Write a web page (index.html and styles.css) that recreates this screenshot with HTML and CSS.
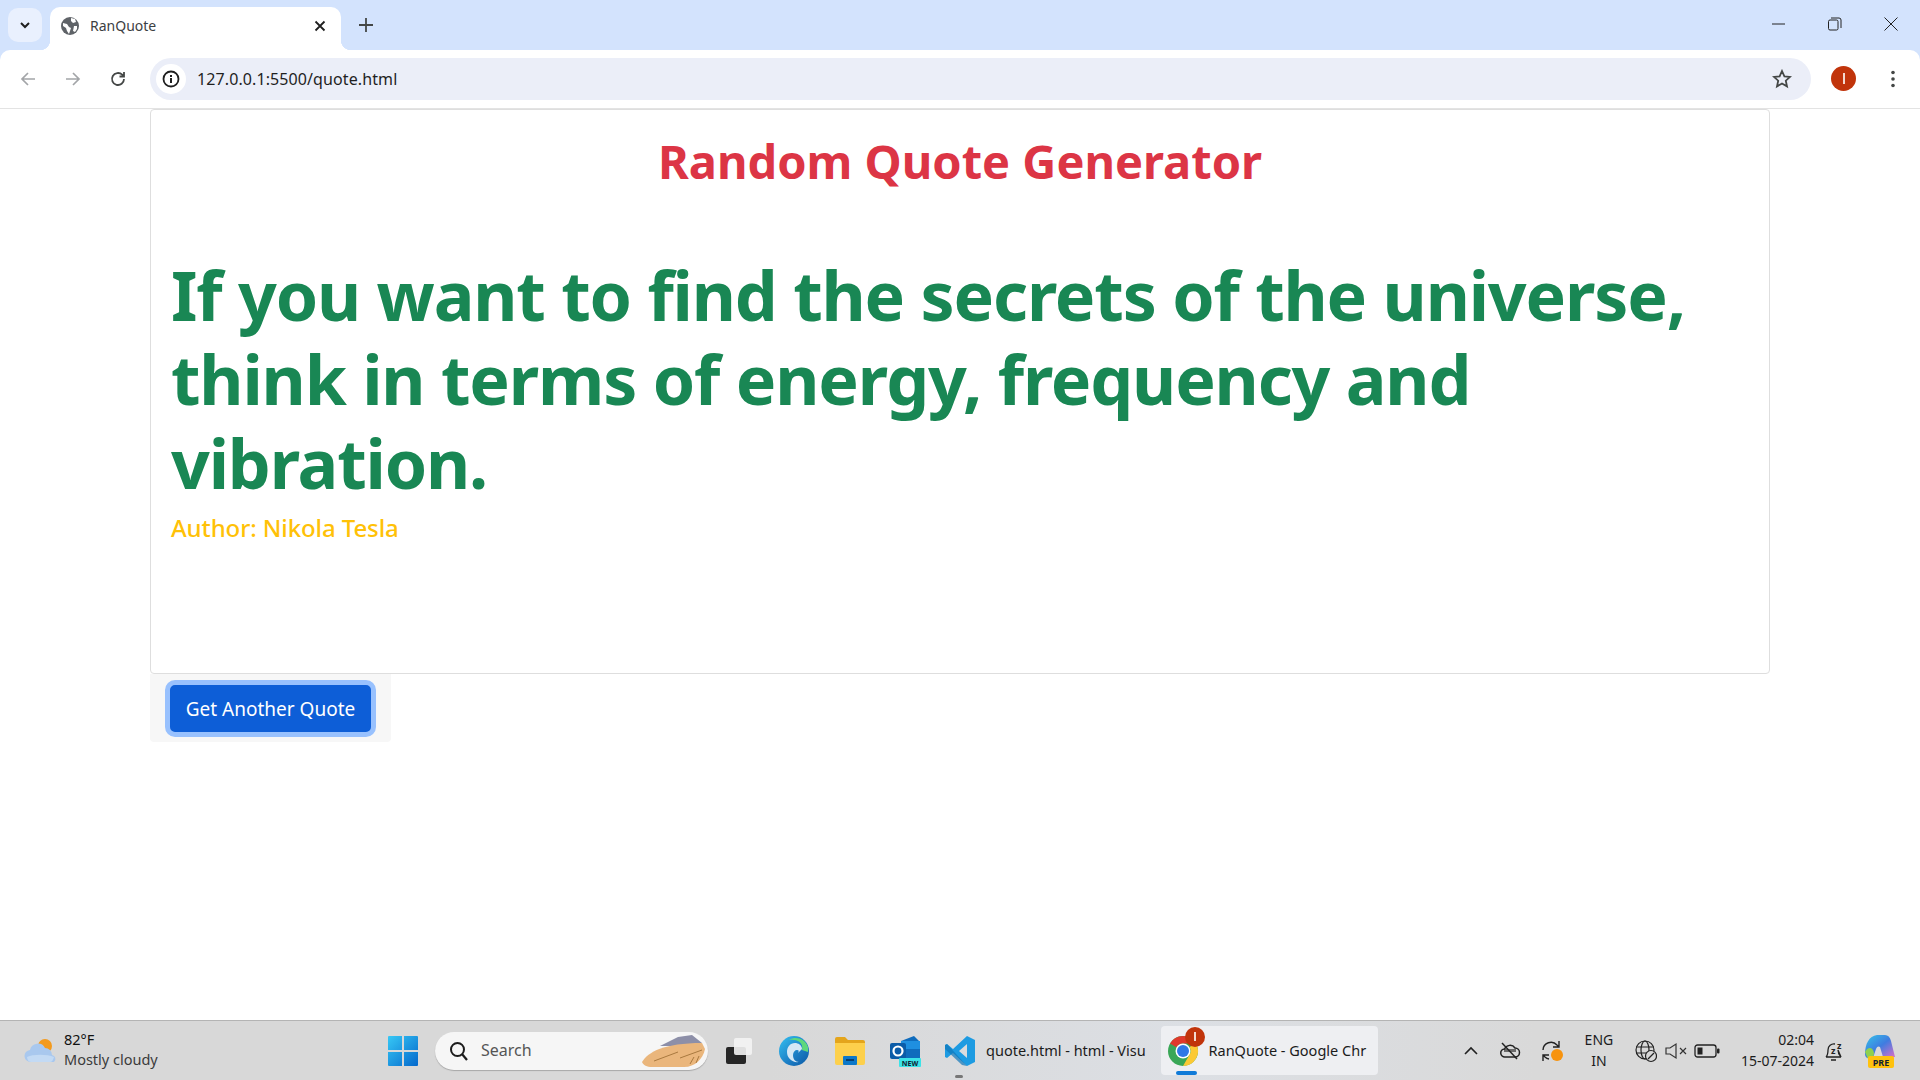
FILE: index.html
```html
<!DOCTYPE html>
<html lang="en">
<head>
    <meta charset="UTF-8">
    <title>RanQuote</title>
    <link rel="stylesheet" href="styles.css">
</head>
<body>
    <div class="browser">
        <div class="chrome-top">
            <!-- tab strip -->
            <div class="tabstrip">
                <div class="tab-search">
                    <svg width="14" height="14" viewBox="0 0 14 14"><path d="M3 5l4 4 4-4" fill="none" stroke="#1f1f1f" stroke-width="2"/></svg>
                </div>
                <div class="tab">
                    <svg class="favicon" width="18" height="18" viewBox="0 0 18 18"><circle cx="9" cy="9" r="9" fill="#5f6368"/><path d="M2 6l4 1 2 3 2 1-1 3-1 3-2-3-1-3-3-2zM10 1l4 1 1 3-3 1-2-2zM13 9l3 0 0 3-2 3-2-1z" fill="#fff"/></svg>
                    <span class="tab-title">RanQuote</span>
                    <svg class="tab-close" width="12" height="12" viewBox="0 0 12 12"><path d="M1.500 1.500l9 9M10.500 1.500l-9 9" stroke="#1f1f1f" stroke-width="1.800"/></svg>
                </div>
                <svg class="new-tab" width="14" height="14" viewBox="0 0 14 14"><path d="M7 0v14M0 7h14" stroke="#444746" stroke-width="1.800"/></svg>
                <div class="win-controls">
                    <svg width="14" height="14" viewBox="0 0 14 14"><path d="M0 7h13" stroke="#222" stroke-width="1"/></svg>
                    <svg width="14" height="14" viewBox="0 0 14 14"><rect x="0.500" y="3" width="9.500" height="10" rx="1.500" fill="none" stroke="#222"/><path d="M3 1h8a2 2 0 0 1 2 2v8" fill="none" stroke="#222"/></svg>
                    <svg width="14" height="14" viewBox="0 0 14 14"><path d="M0.500 0.500l13 13M13.500 0.500l-13 13" stroke="#222"/></svg>
                </div>
            </div>

            <!-- address bar -->
            <div class="toolbar">
                <div class="nav-icons">
                    <svg width="18" height="18" viewBox="0 0 18 18"><path d="M16 9H3M9 3L3 9l6 6" fill="none" stroke="#a3a5a8" stroke-width="1.700"/></svg>
                    <svg width="18" height="18" viewBox="0 0 18 18"><path d="M2 9h13M9 3l6 6-6 6" fill="none" stroke="#a3a5a8" stroke-width="1.700"/></svg>
                    <svg width="18" height="18" viewBox="0 0 18 18"><path d="M15 9a6 6 0 1 1-1.800-4.300L15 6.500M15 2v4.500h-4.500" fill="none" stroke="#444746" stroke-width="1.800"/></svg>
                </div>
                <div class="omnibox">
                    <div class="site-info">
                        <svg width="18" height="18" viewBox="0 0 18 18"><circle cx="9" cy="9" r="7.500" fill="none" stroke="#1f1f1f" stroke-width="1.800"/><path d="M9 8v5M9 5v2" stroke="#1f1f1f" stroke-width="2"/></svg>
                    </div>
                    <span class="url">127.0.0.1:5500/quote.html</span>
                    <svg class="star" width="20" height="20" viewBox="0 0 20 20"><path d="M10 2l2.400 5.300 5.600.6-4.200 3.800 1.200 5.700-5-2.900-5 2.900 1.200-5.700L2 7.900l5.600-.6z" fill="none" stroke="#444746" stroke-width="1.800"/></svg>
                </div>
                <div class="avatar"><span class="avatar-bar"></span></div>
                <svg class="kebab" width="4" height="18" viewBox="0 0 4 18"><circle cx="2" cy="2.500" r="1.800" fill="#444746"/><circle cx="2" cy="9" r="1.800" fill="#444746"/><circle cx="2" cy="15.500" r="1.800" fill="#444746"/></svg>
            </div>
        </div>

        <!-- page -->
        <main class="page">
            <div class="container">
                <section class="card">
                    <h1 class="heading">Random Quote Generator</h1>
                    <h2 class="quote">If you want to find the secrets of the universe, think in terms of energy, frequency and vibration.</h2>
                    <p class="author">Author: Nikola Tesla</p>
                </section>
                <div class="card-footer">
                    <button class="quote-btn" type="button">Get Another Quote</button>
                </div>
            </div>
        </main>

        <!-- windows taskbar -->
        <footer class="taskbar">
            <div class="weather">
                <svg width="34" height="28" viewBox="0 0 34 28"><circle cx="21" cy="9" r="7" fill="#f39a1d"/><path d="M7 25a6 6 0 0 1-1-12 8 8 0 0 1 15-2 7 7 0 0 1 7 7 4 4 0 0 1 2 7z" fill="#a9c8ee"/><path d="M3 20c6-3 20-3 27 0-1 3-2 5-4 5H7c-2 0-4-2-4-5z" fill="#c3daf4"/></svg>
                <div class="weather-text">
                    <span class="temp">82°F</span>
                    <span class="cond">Mostly cloudy</span>
                </div>
            </div>

            <svg class="start" width="30" height="30" viewBox="0 0 30 30">
                <defs><linearGradient id="winblue" x1="0" y1="0" x2="1" y2="1"><stop offset="0" stop-color="#37c8f5"/><stop offset="1" stop-color="#0468cc"/></linearGradient></defs>
                <path d="M0 1a1 1 0 0 1 1-1h13v14H0zM16 0h13a1 1 0 0 1 1 1v13H16zM0 16h14v14H1a1 1 0 0 1-1-1zM16 16h14v13a1 1 0 0 1-1 1H16z" fill="url(#winblue)"/>
            </svg>

            <div class="search">
                <svg width="20" height="20" viewBox="0 0 20 20"><circle cx="8.500" cy="8.500" r="6.500" fill="none" stroke="#1c1c1c" stroke-width="2"/><path d="M13 13l5 6" stroke="#1c1c1c" stroke-width="2.200"/></svg>
                <span class="search-label">Search</span>
                <svg class="search-art" width="66" height="34" viewBox="0 0 66 34"><path d="M20 12L38 3l14-2 10 8-4 3z" fill="#8d8fa8"/><path d="M2 28C8 18 24 9 62 9l3 6c-2 10-10 18-21 18H12C7 33 3 31 2 28z" fill="#eab67c"/><path d="M14 27l24-9M40 24l22-8M50 30l4-7M56 29l3-7" stroke="#a9793f" stroke-width="1" fill="none"/></svg>
            </div>

            <div class="task-icons">
                <svg width="28" height="28" viewBox="0 0 28 28"><rect x="1" y="10" width="20" height="17" rx="2" fill="#262626"/><rect x="9" y="1" width="18" height="17" rx="2" fill="#f4f4f4" fill-opacity="0.900"/></svg>
                <svg width="32" height="32" viewBox="0 0 32 32">
                    <defs><linearGradient id="edgeg" x1="0" y1="0" x2="1" y2="1"><stop offset="0" stop-color="#35c1f1"/><stop offset="0.600" stop-color="#1b7cc4"/><stop offset="1" stop-color="#0c59a4"/></linearGradient></defs>
                    <circle cx="16" cy="16" r="15" fill="url(#edgeg)"/><path d="M30 12C27 3 17 1 11 5c6-1 15 1 13 10l6 2z" fill="#5fd87c"/><path d="M24 14c0-4-4-6-7-6-5 0-8 4-8 9 0 6 5 11 12 10-4 0-6-3-6-7 0-3 2-5 4-5s2 1 1 3z" fill="#d5e7f5"/>
                </svg>
                <svg width="32" height="30" viewBox="0 0 32 30"><path d="M1 3a2 2 0 0 1 2-2h8l3 3h15a2 2 0 0 1 2 2v4H1z" fill="#e4a51c"/><path d="M1 7h30v20a2 2 0 0 1-2 2H3a2 2 0 0 1-2-2z" fill="#fdd04c"/><rect x="9" y="20" width="14" height="9" rx="1" fill="#0d78c8"/><rect x="12" y="23" width="8" height="2" fill="#063f72"/></svg>
                <svg class="outlook" width="32" height="32" viewBox="0 0 32 32"><path d="M12 6l13-5 6 6v20H12z" fill="#0f6cbd"/><path d="M12 6h19v8H12z" fill="#1f8fe0"/><rect x="1" y="8" width="16" height="16" rx="2" fill="#0b5ca8"/><circle cx="9" cy="16" r="4.500" fill="none" stroke="#fff" stroke-width="2.200"/><rect x="10" y="23" width="22" height="9" rx="1" fill="#3be3e8"/><text class="new-badge" x="21" y="30.500" text-anchor="middle">NEW</text></svg>
                <div class="vscode">
                    <svg width="32" height="32" viewBox="0 0 32 32"><path d="M23 1l8 4v22l-8 4-14-13-6 5-2-1V10l2-1 6 5zM23 9l-8 7 8 7z" fill="#1d9be2"/><path d="M1 10l2-1 20 22-5-1L1 14z" fill="#0f77ba" fill-opacity="0.700"/></svg>
                    <span class="task-label">quote.html - html - Visu</span>
                    <span class="running-dot"></span>
                </div>
                <div class="chrome-task">
                    <div class="chrome-icon">
                        <svg width="32" height="32" viewBox="0 0 32 32"><circle cx="16" cy="16" r="15" fill="#3aa757"/><path d="M16 1a15 15 0 0 1 13 7.500H16a7.500 7.500 0 0 0-6.500 3.700L3 8.500A15 15 0 0 1 16 1z" fill="#e0392c"/><path d="M29 8.500A15 15 0 0 1 16 31l6.500-11.200A7.500 7.500 0 0 0 22.500 12z" fill="#fcc934"/><circle cx="16" cy="16" r="7.500" fill="#fff"/><circle cx="16" cy="16" r="6" fill="#2f78e6"/></svg>
                        <span class="chrome-badge"><span class="badge-bar"></span></span>
                    </div>
                    <span class="task-label">RanQuote - Google Chr</span>
                    <span class="active-bar"></span>
                </div>
            </div>

            <div class="tray">
                <svg class="tray-chevron" width="16" height="10" viewBox="0 0 16 10"><path d="M2 8l6-6 6 6" fill="none" stroke="#222" stroke-width="1.600"/></svg>
                <svg class="tray-cloud" width="22" height="20" viewBox="0 0 22 20"><path d="M6 16a4 4 0 0 1-.5-8A6 6 0 0 1 16 7a4.500 4.500 0 0 1 0 9z" fill="none" stroke="#222" stroke-width="1.500"/><path d="M5 8h12v3H5z" fill="#222" fill-opacity="0.600"/><path d="M3 2l15 16" stroke="#222" stroke-width="1.500"/></svg>
                <svg class="tray-sync" width="26" height="26" viewBox="0 0 26 26"><path d="M4 12a8 8 0 0 1 14-5l2 2M20 3v6h-6M4 17l2 2a8 8 0 0 0 4 2M4 23v-6h6" fill="none" stroke="#222" stroke-width="1.400"/><circle cx="18" cy="17" r="6" fill="#f7930e"/></svg>
                <div class="lang"><span>ENG</span><span>IN</span></div>
                <svg class="tray-globe" width="22" height="24" viewBox="0 0 22 24"><circle cx="10" cy="11" r="9" fill="none" stroke="#222" stroke-width="1.200"/><ellipse cx="10" cy="11" rx="4" ry="9" fill="none" stroke="#222" stroke-width="1.200"/><path d="M1 8h18M1 14h18" stroke="#222" stroke-width="1.200"/><circle cx="16" cy="17" r="5.500" fill="#d8d8d8" stroke="#222" stroke-width="1.200"/><path d="M13 20l6-6" stroke="#222" stroke-width="1.200"/></svg>
                <svg class="tray-sound" width="24" height="18" viewBox="0 0 24 18"><path d="M1 6h4l6-4v14l-6-4H1z" fill="none" stroke="#333" stroke-width="1.200"/><path d="M15 6l6 6M21 6l-6 6" stroke="#333" stroke-width="1.200"/></svg>
                <svg class="tray-battery" width="26" height="16" viewBox="0 0 26 16"><rect x="1" y="2" width="21" height="12" rx="2.500" fill="none" stroke="#222" stroke-width="1.300"/><rect x="3.500" y="4.500" width="5" height="7" fill="#222"/><rect x="23" y="5.500" width="2.500" height="5" rx="1" fill="#222"/></svg>
                <div class="clock"><span>02:04</span><span>15-07-2024</span></div>
                <svg class="tray-bell" width="22" height="24" viewBox="0 0 22 24"><path d="M3 18c2-2 2-4 2-7a6 6 0 0 1 7-6M15 11c0 3 1 5 3 7zM3 18h15M8 21h5" fill="none" stroke="#222" stroke-width="1.300"/><text class="zz" x="14" y="10">z</text><text class="zz" x="8" y="15">z</text></svg>
                <svg class="tray-copilot" width="32" height="34" viewBox="0 0 32 34">
                    <defs><linearGradient id="copg" x1="0" y1="0" x2="1" y2="1"><stop offset="0" stop-color="#35c4e8"/><stop offset="0.500" stop-color="#3f7ce0"/><stop offset="1" stop-color="#e06fc8"/></linearGradient></defs>
                    <path d="M2 20C2 10 6 2 14 1h8c3 0 5 2 6 6l4 16H20l-3-10c-1-1-3-1-4 2l-3 9H5c-2 0-3-2-3-4z" fill="url(#copg)"/><path d="M2 18c3-6 8-5 9 1l-1 6H5z" fill="#8fd14f"/>
                    <rect x="5" y="22" width="26" height="12" rx="2" fill="#ffc20e"/><text class="pre-badge" x="18" y="31.500" text-anchor="middle">PRE</text>
                </svg>
            </div>
        </footer>
    </div>
</body>
</html>
```

FILE: styles.css
```css
* {
    box-sizing: border-box;
}
html, body {
    margin: 0;
    height: 100%;
}
body {
    font-family: "Noto Sans", "Open Sans", Arial, sans-serif;
    background: #fff;
    overflow: hidden;
}
.browser {
    display: flex;
    flex-direction: column;
    height: 1080px;
}
.chrome-top {
    background: #d3e3fd;
}

/* tab strip */
.tabstrip {
    display: flex;
    align-items: flex-end;
    height: 50px;
    padding-left: 8px;
}
.tab-search {
    display: flex;
    align-items: center;
    justify-content: center;
    width: 34px;
    height: 34px;
    margin-bottom: 8px;
    border-radius: 10px;
    background: #e9f0fe;
}
.tab {
    position: relative;
    display: flex;
    align-items: center;
    width: 291px;
    height: 43px;
    margin-left: 8px;
    padding: 0 15px 6px 11px;
    background: #fff;
    border-radius: 10px 10px 0 0;
}
.tab::before, .tab::after {
    content: "";
    position: absolute;
    bottom: 0;
    width: 10px;
    height: 10px;
}
.tab::before {
    left: -10px;
    background: radial-gradient(circle at 0 0, transparent 10px, #fff 10.5px);
}
.tab::after {
    right: -10px;
    background: radial-gradient(circle at 100% 0, transparent 10px, #fff 10.5px);
}
.tab-title {
    flex: 1;
    margin-left: 11px;
    font-size: 14px;
    color: #3c4043;
}
.new-tab {
    margin: 0 0 18px 18px;
}
.win-controls {
    display: flex;
    gap: 42px;
    margin: 0 22px 19px auto;
}

/* toolbar */
.toolbar {
    display: flex;
    align-items: center;
    height: 59px;
    padding-bottom: 1px;
    background: #fff;
    border-bottom: 1px solid #e3e3e3;
    border-radius: 10px 10px 0 0;
}
.nav-icons {
    display: flex;
    gap: 27px;
    width: 150px;
    padding-left: 19px;
}
.omnibox {
    display: flex;
    align-items: center;
    width: 1661px;
    height: 42px;
    border-radius: 21px;
    background: #ebeef8;
    padding: 0 19px 0 6px;
}
.site-info {
    display: flex;
    align-items: center;
    justify-content: center;
    width: 30px;
    height: 30px;
    border-radius: 50%;
    background: #fff;
}
.url {
    flex: 1;
    margin-left: 11px;
    padding-top: 1px;
    font-size: 16px;
    letter-spacing: 0.1px;
    color: #1f1f1f;
}
.avatar {
    display: flex;
    align-items: center;
    justify-content: center;
    width: 25px;
    height: 25px;
    margin-left: 20px;
    border-radius: 50%;
    background: #c1340b;
}
.avatar-bar {
    width: 2px;
    height: 11px;
    background: #f3d9cf;
}
.kebab {
    margin-left: 35px;
}

/* page content */
.page {
    flex: 1;
    padding-left: 150px;
}
.container {
    width: 1620px;
}
.card {
    height: 565px;
    padding: 0 20px;
    border: 1px solid #dedede;
    border-radius: 4px;
}
.heading {
    margin: 13px 0 0;
    font-size: 47px;
    font-weight: 700;
    line-height: 76px;
    text-align: center;
    color: #dc3545;
}
.quote {
    margin: 54px 0 0;
    font-size: 68px;
    font-weight: 700;
    letter-spacing: -1.150px;
    line-height: 84px;
    color: #198754;
}
.author {
    margin: 5px 0 0;
    font-size: 24px;
    font-weight: 500;
    letter-spacing: -0.100px;
    line-height: 36px;
    color: #ffc107;
}
.card-footer {
    width: 241px;
    height: 68px;
    padding: 6px 15px;
    background: #f7f7f7;
    border-radius: 0 0 4px 4px;
}
.quote-btn {
    width: 211px;
    height: 57px;
    padding: 0;
    font-family: inherit;
    font-size: 19px;
    color: #fff;
    background: #0d5ed7;
    border: 5px solid #98c1fe;
    border-radius: 10px;
}

/* taskbar */
.taskbar {
    display: flex;
    align-items: center;
    height: 60px;
    padding-left: 24px;
    background: linear-gradient(90deg, #d8d8d8 0%, #d8d8d8 40%, #dcdfe4 62%, #d9d9d9 80%);
    border-top: 1px solid #b4b4b4;
}
.weather {
    display: flex;
    align-items: center;
    gap: 6px;
    width: 364px;
}
.weather-text {
    display: flex;
    flex-direction: column;
    margin-top: -4px;
    font-size: 14.500px;
    line-height: 20px;
}
.temp {
    color: #111;
}
.cond {
    color: #3b3b3b;
}
.start {
    flex: none;
}
.search {
    display: flex;
    align-items: center;
    width: 273px;
    height: 38px;
    margin-left: 17px;
    padding: 0 2px 0 14px;
    border-radius: 19px;
    background: #f6f6f6;
    box-shadow: 0 1px 1px #a8a8a8;
}
.search-label {
    flex: 1;
    margin-left: 12px;
    padding-bottom: 2px;
    font-size: 16px;
    color: #555;
}
.task-icons {
    display: flex;
    align-items: center;
    margin-left: 17px;
    gap: 24.500px;
}
.outlook {
    margin-left: -2px;
}
.vscode {
    position: relative;
    display: flex;
    align-items: center;
    gap: 10px;
    margin-left: -1px;
}
.task-label {
    padding-bottom: 2px;
    font-size: 14.500px;
    color: #1c1c1c;
    white-space: nowrap;
    overflow: hidden;
}
.vscode .task-label {
    width: 160px;
}
.running-dot {
    position: absolute;
    left: 11px;
    bottom: -11px;
    width: 8px;
    height: 3px;
    border-radius: 2px;
    background: #777;
}
.chrome-task {
    position: relative;
    display: flex;
    align-items: center;
    width: 217px;
    height: 49px;
    margin-left: -10px;
    padding-left: 6px;
    gap: 10px;
    border-radius: 4px;
    background: #eeeff2;
}
.chrome-task .task-label {
    width: 159px;
}
.chrome-icon {
    position: relative;
    display: flex;
}
.chrome-badge {
    position: absolute;
    top: -8px;
    right: -6px;
    display: flex;
    align-items: center;
    justify-content: center;
    width: 20px;
    height: 20px;
    border-radius: 50%;
    background: #c1340b;
}
.badge-bar {
    width: 2px;
    height: 9px;
    background: #f3d9cf;
}
.active-bar {
    position: absolute;
    left: 15px;
    bottom: 0;
    width: 21px;
    height: 4px;
    border-radius: 2px;
    background: #0f7ad8;
}
.tray {
    display: flex;
    align-items: center;
    margin-left: auto;
    padding-right: 25px;
    color: #1c1c1c;
}
.tray-chevron {
    margin-right: 20px;
}
.tray-sync {
    margin: 0 0 0 18px;
}
.lang {
    display: flex;
    flex-direction: column;
    align-items: center;
    width: 36px;
    margin-left: 16px;
    padding-bottom: 2px;
    font-size: 14px;
    line-height: 21px;
}
.tray-globe {
    margin-left: 18px;
}
.tray-sound {
    margin-left: 8px;
}
.tray-battery {
    margin-left: 5px;
}
.clock {
    display: flex;
    flex-direction: column;
    align-items: flex-end;
    margin-left: 21px;
    padding-bottom: 2px;
    font-size: 14px;
    line-height: 21px;
}
.tray-bell {
    margin-left: 9px;
}
.tray-copilot {
    margin-left: 18px;
}
.new-badge, .pre-badge {
    font-family: "Noto Sans", sans-serif;
    font-weight: 700;
    font-size: 7px;
    fill: #123;
}
.pre-badge {
    font-size: 9px;
}
.zz {
    font-family: "Noto Sans", sans-serif;
    font-weight: 700;
    font-size: 9px;
    fill: #222;
}
```
